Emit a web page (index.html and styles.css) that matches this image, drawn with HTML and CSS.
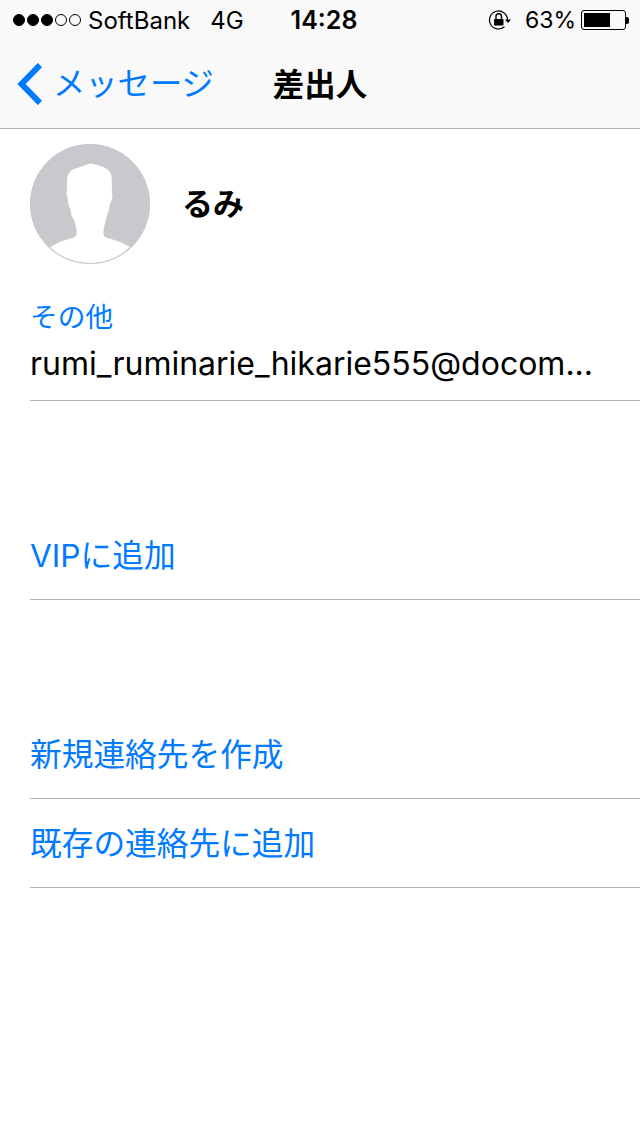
FILE: index.html
```html
<!DOCTYPE html>
<html lang="ja">
<head>
    <meta charset="UTF-8">
    <meta name="viewport" content="width=device-width, initial-scale=1.0">
    <title>差出人</title>
    <link rel="stylesheet" href="styles.css">
</head>
<body>
    <header class="top-bar">
        <div class="status-bar">
            <div class="status-left">
                <span class="signal">
                    <i class="dot on"></i><i class="dot on"></i><i class="dot on"></i><i class="dot"></i><i class="dot"></i>
                </span>
                <span class="carrier">SoftBank</span>
                <span class="network">4G</span>
            </div>
            <div class="clock">14:28</div>
            <div class="status-right">
                <svg class="lock-icon" width="24" height="24" viewBox="0 0 24 24">
                    <path d="M19.500 12A9 9 0 1 0 16.500 18.700" fill="none" stroke="#000" stroke-width="1.200"/>
                    <path d="M17 11.500h6l-3 3.500z" fill="#000"/>
                    <rect x="6" y="11" width="9.500" height="6.500" rx="1" fill="#000"/>
                    <path d="M8 11.500V8.500a2.700 2.700 0 0 1 5.500 0v3" fill="none" stroke="#000" stroke-width="1.400"/>
                </svg>
                <span class="percent">63%</span>
                <span class="battery"><span class="battery-level"></span></span>
                <span class="battery-tip"></span>
            </div>
        </div>
        <nav class="nav-bar">
            <a class="back-link" href="#">
                <svg width="28" height="44" viewBox="0 0 28 44">
                    <path d="M26 3 7.500 22 26 41" fill="none" stroke="#007aff" stroke-width="6"/>
                </svg>
                <span>メッセージ</span>
            </a>
            <h1>差出人</h1>
        </nav>
    </header>

    <main>
        <section class="contact-head">
            <svg class="avatar" width="120" height="120" viewBox="0 0 120 120">
                <circle cx="60" cy="60" r="60" fill="#c8c8cd"/>
                <path d="M20 103Q30 97 44 93.500 47.500 92 46.500 85L44 76Q41 72 40.500 66 37.500 60 37.500 53L36.700 52 37 36Q37.500 28 43 25.500 50 23 60 19.500 71 21 77 25 81.500 28 81.700 35L82 51 82.700 53 80 60Q79 68 76 74.500L73.500 86Q72.500 92 76 93.500 90 97 100 103 84 119.500 60 119.500 36 119.500 20 103Z" fill="#fff"/>
                <circle cx="60" cy="60" r="59.500" fill="none" stroke="#c8c8cd" stroke-width="1"/>
            </svg>
            <div class="contact-name">るみ</div>
        </section>

        <section class="field-row">
            <div class="field-label">その他</div>
            <div class="field-value">rumi_ruminarie_hikarie555@docom...</div>
        </section>

        <section class="action-group">
            <a class="action-row" href="#"><span>VIPに追加</span></a>
        </section>

        <section class="action-group">
            <a class="action-row" href="#"><span>新規連絡先を作成</span></a>
            <a class="action-row" href="#"><span>既存の連絡先に追加</span></a>
        </section>
    </main>
</body>
</html>
```

FILE: styles.css
```css
* {
    box-sizing: border-box;
}

body {
    margin: 0;
    height: 1136px;
    overflow: hidden;
    background-color: #fff;
    color: #000;
    font-family: Inter, "Noto Sans CJK JP", sans-serif;
}

.top-bar {
    height: 129px;
    background-color: #f9f9f9;
    border-bottom: 1px solid #b2b2b2;
}

.status-bar {
    display: grid;
    grid-template-columns: 1fr auto 1fr;
    align-items: center;
    height: 40px;
    padding: 0 11px 0 13px;
    font-size: 24px;
}

.status-left {
    display: flex;
    align-items: center;
}

.signal {
    display: flex;
    gap: 2px;
    margin-right: 7px;
}

.dot {
    width: 12px;
    height: 12px;
    border: 1px solid #000;
    border-radius: 50%;
}

.dot.on {
    background-color: #000;
}

.network {
    margin-left: 20px;
}

.clock {
    font-size: 25px;
    font-weight: 600;
    padding-left: 6px;
}

.status-right {
    display: flex;
    align-items: center;
    justify-content: flex-end;
    font-size: 23px;
}

.lock-icon {
    margin-right: 13px;
}

.percent {
    margin-right: 5px;
}

.battery {
    width: 45px;
    height: 20px;
    padding: 2px;
    border: 1px solid #000;
    border-radius: 3px;
}

.battery-level {
    display: block;
    width: 26px;
    height: 100%;
    background-color: #000;
}

.battery-tip {
    width: 3px;
    height: 7px;
    background-color: #000;
    border-radius: 0 2px 2px 0;
}

.nav-bar {
    display: flex;
    align-items: center;
    height: 88px;
    padding-left: 14px;
}

.back-link {
    display: flex;
    align-items: center;
    gap: 11px;
    color: #007aff;
    font-size: 32.300px;
    text-decoration: none;
}

.back-link span {
    padding-bottom: 6px;
}

.nav-bar h1 {
    margin: 0 0 0 59px;
    padding-bottom: 4px;
    font-size: 31.500px;
    font-weight: 700;
}

.contact-head {
    display: flex;
    align-items: center;
    gap: 32px;
    padding: 15px 0 0 30px;
}

.avatar {
    flex: none;
}

.contact-name {
    padding-bottom: 6px;
    font-size: 31px;
    font-weight: 700;
}

.field-row {
    height: 137px;
    margin-left: 30px;
    padding-top: 37px;
    border-bottom: 1px solid #b2b2b2;
}

.field-label {
    color: #007aff;
    font-size: 27.700px;
    line-height: 32px;
}

.field-value {
    margin-top: 7px;
    font-size: 32px;
    line-height: 48px;
    white-space: nowrap;
}

.action-group {
    margin: 110px 0 0 30px;
}

.action-row {
    display: flex;
    align-items: center;
    height: 89px;
    color: #007aff;
    font-size: 31.700px;
    text-decoration: none;
    border-bottom: 1px solid #b2b2b2;
}

.action-row span {
    padding-bottom: 5px;
}
```
